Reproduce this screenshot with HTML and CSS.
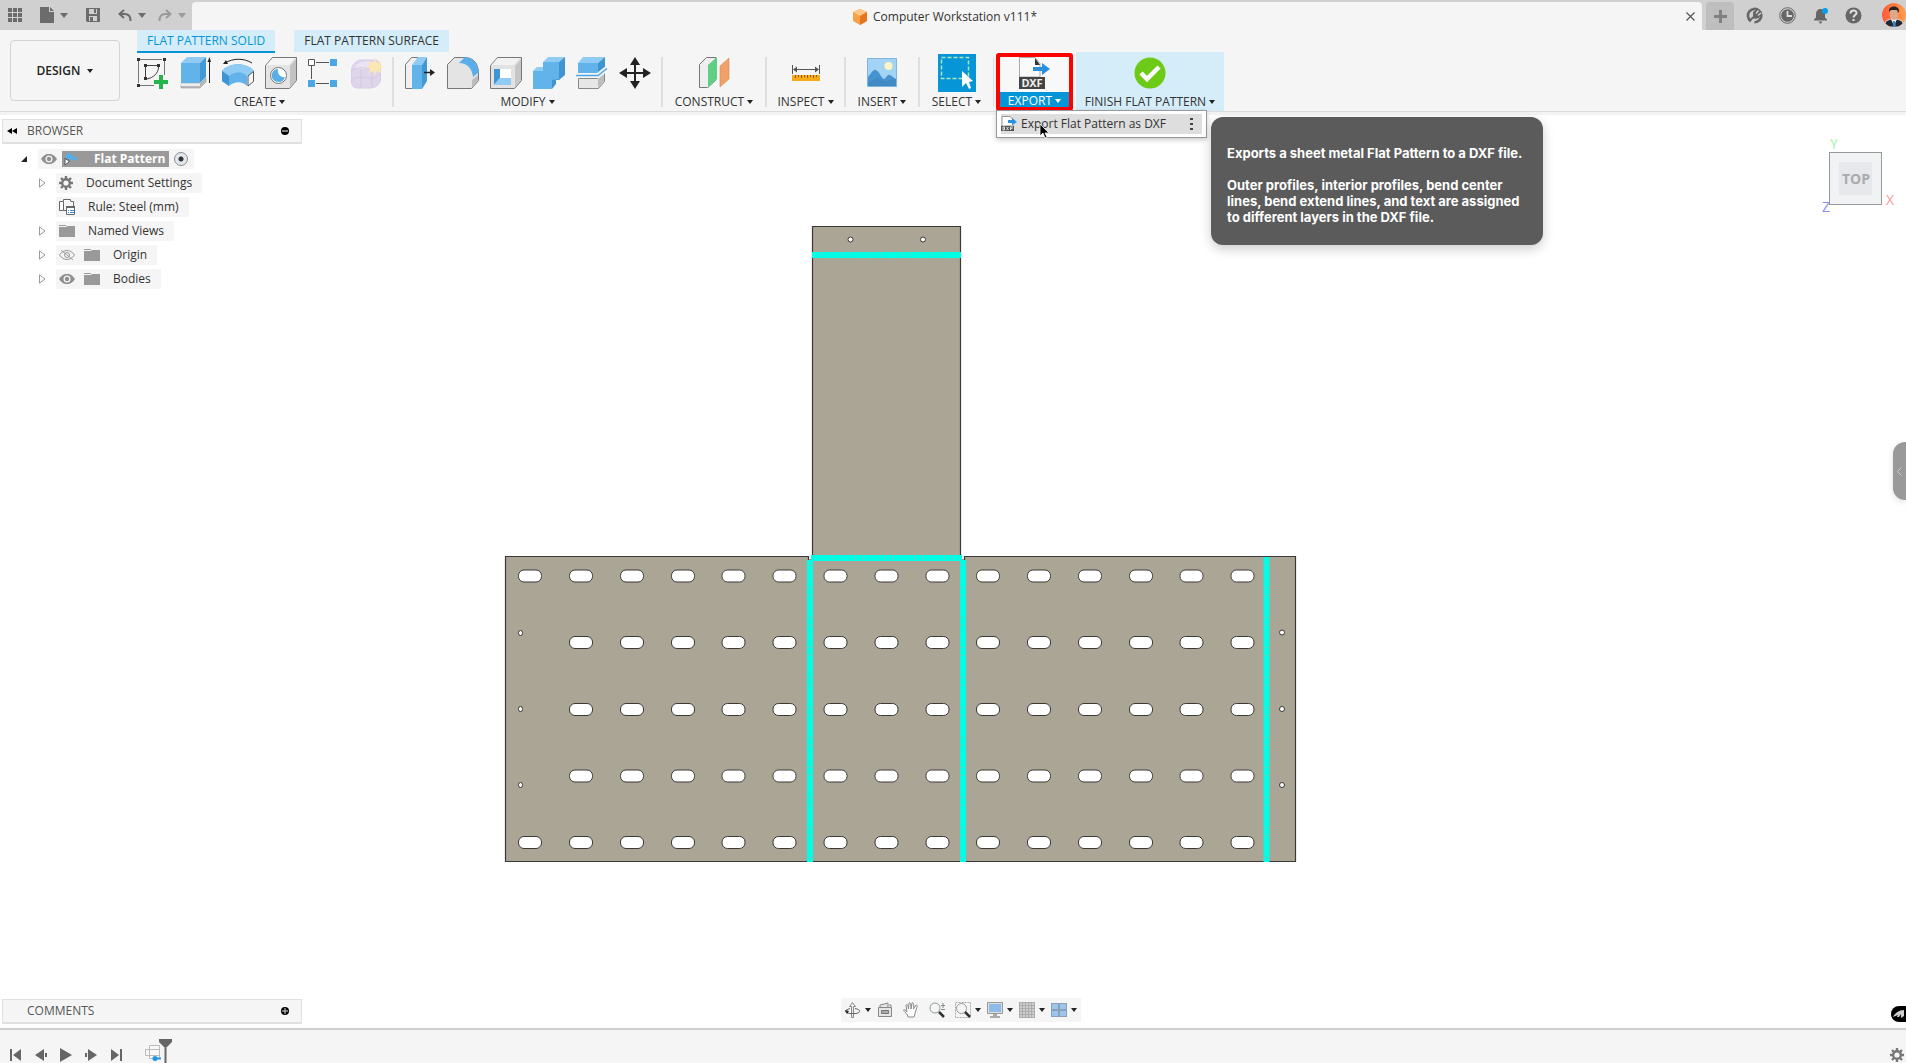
FILE: index.html
```html
<!DOCTYPE html>
<html lang="en">
<head>
<meta charset="utf-8">
<meta name="viewport" content="width=device-width, initial-scale=1">
<title>Computer Workstation v111*</title>
<link rel="stylesheet" href="styles.css">
</head>
<body>
<header class="titlebar">
  <div class="quick">
    <button class="tool" aria-label="Data panel"><svg width="14" height="14" viewBox="0 0 14 14"><path fill="#6c6c6c" d="M0 0h4v4H0zM5 0h4v4H5zM10 0h4v4h-4zM0 5h4v4H0zM5 5h4v4H5zM10 5h4v4h-4zM0 10h4v4H0zM5 10h4v4H5zM10 10h4v4h-4z"/></svg></button>
    <button class="tool file" aria-label="File"><svg width="14" height="16" viewBox="0 0 14 16"><path fill="#6c6c6c" d="M0 0h9v5h5v11H0z"/><path fill="#6c6c6c" d="M10 0l4 4h-4z"/></svg><i class="caret big"></i></button>
    <button class="tool save" aria-label="Save"><svg width="14" height="14" viewBox="0 0 14 14"><path fill="#6c6c6c" fill-rule="evenodd" d="M0 0h14v14H1l-1-1zM3 1v5h8V1zM3 8v5h8V8z"/><path fill="#6c6c6c" d="M8 1h2v4H8zM4 9h3v4H4z"/></svg></button>
    <button class="tool undo" aria-label="Undo"><svg width="14" height="13" viewBox="0 0 14 13"><path fill="none" stroke="#6c6c6c" stroke-width="2" d="M6 1L1.500 5L6 9M2 5h5c4 0 5.500 3 5.500 7"/></svg><i class="caret big"></i></button>
    <button class="tool redo" aria-label="Redo"><svg width="14" height="13" viewBox="0 0 14 13"><path fill="none" stroke="#9a9a9a" stroke-width="2" d="M8 1l4.500 4L8 9M12 5H7c-4 0-5.500 3-5.500 7"/></svg><i class="caret big"></i></button>
  </div>
  <div class="doc-tab">
    <div class="doc-title">
      <svg width="14" height="16" viewBox="0 0 14 16"><path fill="#f9a04a" d="M7 0l7 3v9l-7 4-7-4V3z"/><path fill="#ffc68a" d="M7 0l7 3-7 4-7-4z"/><path fill="#e5761d" d="M7 7l7-4v9l-7 4z"/></svg>
      <span>Computer Workstation v111*</span>
    </div>
    <button class="tool" aria-label="Close tab"><svg width="9" height="9" viewBox="0 0 9 9"><path stroke="#555" stroke-width="1.200" d="M.5.5l8 8M8.500.5l-8 8"/></svg></button>
  </div>
  <button class="new-tab" aria-label="New tab"><svg width="13" height="13" viewBox="0 0 13 13"><path stroke="#808080" stroke-width="3" d="M6.500 0v13M0 6.500h13"/></svg></button>
  <div class="account">
    <button class="tool" aria-label="Extensions"><svg width="17" height="17" viewBox="0 0 17 17"><path fill="none" stroke="#666" stroke-width="2.600" d="M5 14.200A6.700 6.700 0 1 1 13.500 13.200 6.700 6.700 0 0 1 8.500 15.200"/><path fill="#666" d="M7 5l4-3 4 5-2 4-4 1-2-2z"/><path stroke="#d0d0d0" stroke-width="1.400" d="M10 6.500l2.500-3M12 8.500l3-2.500"/><path stroke="#666" stroke-width="2" d="M3 14l6-5"/></svg></button>
    <button class="tool" aria-label="Job status"><svg width="17" height="17" viewBox="0 0 17 17"><circle cx="8.500" cy="8.500" r="7.800" fill="none" stroke="#666"/><circle cx="8.500" cy="8.500" r="6.300" fill="#666"/><path fill="none" stroke="#ddd" stroke-width="1.800" d="M8.500 4v5H13"/></svg></button>
    <button class="tool" aria-label="Notifications"><svg width="17" height="17" viewBox="0 0 17 17"><path fill="#666" d="M2 13.500v-1l2-2V7c0-3 2-4.500 3.500-5h2C12 3 13 5 13 7v3.500l2 2v1zM6.500 14.500h4L9 16.500H8z"/><circle cx="13" cy="4" r="3" fill="#0a9de8"/></svg></button>
    <button class="tool" aria-label="Help"><svg width="17" height="17" viewBox="0 0 17 17"><circle cx="8.500" cy="8.500" r="8" fill="#666"/><path fill="none" stroke="#e0e0e0" stroke-width="2" d="M5.500 6.500c0-4 6-4 6-.5 0 2-3 2-3 4.500M8.500 12v2"/></svg></button>
    <button class="tool avatar" aria-label="Profile"><svg width="24" height="24" viewBox="0 0 24 24"><defs><linearGradient id="av"><stop offset="0" stop-color="#ff5a3c"/><stop offset="1" stop-color="#ffa04a"/></linearGradient><clipPath id="ac"><circle cx="12" cy="12" r="12"/></clipPath></defs><g clip-path="url(#ac)"><path fill="url(#av)" d="M0 0h24v24H0z"/><path fill="#1d2836" stroke="#eee" stroke-width=".8" d="M2 24l2-6 5-2h6l5 2 2 6z"/><path fill="#f4f6f8" d="M9 16l3 7 3-7z"/><path fill="#4b82b8" d="M11 18h2l1 6h-3z"/><path fill="#dca98b" d="M8 7h8v5c0 3-2 5-4 5s-4-2-4-5z"/><path fill="#2b211e" d="M7 9c-1-7 10-7 10-1l-1 2-1-3H9z"/></g></svg></button>
  </div>
</header>

<section class="ribbon" aria-label="Ribbon">
  <button class="workspace-switch">DESIGN <i class="caret"></i></button>
  <div class="ribbon-main">
    <div class="ribbon-tabs" role="tablist">
      <button class="ribbon-tab active" role="tab" aria-selected="true">FLAT PATTERN SOLID</button>
      <button class="ribbon-tab" role="tab" aria-selected="false">FLAT PATTERN SURFACE</button>
    </div>
    <div class="groups">
      <div class="group create">
        <div class="icons">
          <button class="tool" aria-label="Create sketch"><svg width="32" height="32" viewBox="0 0 32 32"><path fill="none" stroke="#777" d="M4 2.500h22M2.500 4v22M28.500 4v14M4 28.500h14"/><path fill="#333" d="M1 1h3v3H1zM27 1h3v3h-3zM1 27h3v3H1zM8 7h3v3H8zM21 7h3v3h-3zM8 20h3v3H8z"/><path fill="none" stroke="#444" d="M11 8.500h10M9.500 10v10M22.500 10c0 6-5 11-12 12"/><path fill="#25b34b" d="M23 18h4v5h5v4h-5v5h-4v-5h-5v-4h5z"/></svg></button>
          <button class="tool" aria-label="Extrude"><svg width="32" height="32" viewBox="0 0 32 32"><path fill="#b9b9b9" stroke="#999" stroke-width=".6" d="M2 27h19l6-6v4l-6 6H2z"/><path fill="#eee" d="M2 27h19v2H2z"/><path fill="#62b3ea" d="M2 6h19v20H2z"/><path fill="#8fcbf3" d="M2 6l6-6h19l-6 6z"/><path fill="#4398d6" d="M21 6l6-6v20l-6 6z"/><path stroke="#222" d="M30.500 3v23"/><path fill="#222" d="M28.500 5l2-5 1.500 5z"/></svg></button>
          <button class="tool" aria-label="Revolve"><svg width="32" height="32" viewBox="0 0 32 32"><path fill="#62b3ea" d="M0 14c7-9 25-9 32 0l-7 5v10c-5-5-12-5-18 0l-7-5z"/><path fill="#8fcbf3" d="M0 14c7-9 25-9 32 0l-7 5c-5-5-12-5-18 0z"/><path fill="#3f95d2" d="M0 14l7 5v10l-7-5z"/><path fill="#f5f5f5" stroke="#555" d="M26 19l5.500-4.500v10L26 29z"/><path fill="none" stroke="#222" d="M3 6c8-5 19-5 27 0"/><path fill="#222" d="M1 7l3-4 2 4z"/></svg></button>
          <button class="tool" aria-label="Hole"><svg width="32" height="32" viewBox="0 0 32 32"><path fill="#e4e4e4" stroke="#777" d="M.5 8.500l7-8h24v23l-7 8H.5z"/><path fill="#c2c2c2" d="M25 9l6-7v21l-6 7z"/><path fill="#f5f5f5" d="M1.500 8L8 1h22l-6 7z"/><circle cx="13.500" cy="18.500" r="8" fill="#fff" stroke="#777"/><path fill="#58ade7" d="M13 12c-9 1-8 13 1 13 3 0 5-2 6-5-5 1-8-4-7-8z"/></svg></button>
          <button class="tool" aria-label="Pattern"><svg width="32" height="32" viewBox="0 0 32 32"><path stroke="#555" d="M8 5.500h13M8 26.500h13M3.500 9v13"/><path fill="#fff" stroke="#555" d="M.5 2.500h6v6h-6z"/><path fill="#4aa6e4" d="M22 2h7v7h-7zM0 23h7v7H0zM22 23h7v7h-7z"/></svg></button>
          <button class="tool" aria-label="Create form"><svg width="32" height="32" viewBox="0 0 32 32"><path fill="#e0d6ec" stroke="#d8cce6" d="M.5 13c0-5 5-10 10-10h12c5 0 7 3 7 7v12c0 5-5 9-10 9h-13c-4 0-6-3-6-6z"/><path fill="#eae3f3" d="M5 8c5-5 17-4 22-1l-5 5H4z"/><path fill="none" stroke="#d3c7e2" d="M1 13c7-3 14-3 20 0v17M10 12v18M1 22c8-3 15-2 20 0l8-5"/><path fill="#fbe7b4" d="M24 1l2 5 4-2-1 4 3 2-3 2 1 4-4-2-2 4-2-4-4 2 1-4-4-2 4-2-1-4 4 2z"/></svg></button>
        </div>
        <button class="group-label">CREATE <i class="caret"></i></button>
      </div>
      <div class="group modify">
        <div class="icons">
          <button class="tool" aria-label="Press pull"><svg width="32" height="32" viewBox="0 0 32 32"><path fill="#f0f0f0" stroke="#777" d="M1.500 31.500v-24l6-7h8v24l-7 7z"/><path fill="#62b3ea" d="M8 8h10v24H8z"/><path fill="#8fcbf3" d="M8 8l6-8h9l-5 8z"/><path fill="#4398d6" d="M18 8l5-8v24l-5 8z"/><path stroke="#222" stroke-width="1.500" d="M20 15.500h8"/><path fill="#222" d="M26 12l5 3.500-5 3.500z"/></svg></button>
          <button class="tool" aria-label="Fillet"><svg width="32" height="32" viewBox="0 0 32 32"><path fill="#e4e4e4" stroke="#777" d="M.5 31.500v-24l7-7H19c8 1 12 6 12.500 15v8l-7 8z"/><path fill="#bdbdbd" d="M25 23l6-5v5l-6 7z"/><path fill="#5aaee9" d="M12 6l6-6c9 1 13 8 14 15l-6 5C25 11 20 6 12 6z"/></svg></button>
          <button class="tool" aria-label="Shell"><svg width="32" height="32" viewBox="0 0 32 32"><path fill="#e2e2e2" stroke="#777" d="M.5 8.500l7-8h24v23l-7 8H.5z"/><path fill="#c6c6c6" d="M25 9l6-7v21l-6 7z"/><path fill="#f2f2f2" d="M1.500 8L8 1h22l-6 7z"/><path fill="#fff" d="M4 12h17v16H4z"/><path fill="#3f95d2" d="M4 12h6v9l-6 7z"/><path fill="#8fcbf3" d="M4 28l6-7h11v7z"/></svg></button>
          <button class="tool" aria-label="Combine"><svg width="32" height="32" viewBox="0 0 32 32"><path fill="#62b3ea" d="M0 14h10V5h16v18h-7v9H0z"/><path fill="#8fcbf3" d="M10 5l5-5h17l-6 5zM0 14l4-4h6v4z"/><path fill="#3f95d2" d="M26 5l6-5v18l-6 5h-3v4l-4 5v-9l7-1z"/></svg></button>
          <button class="tool" aria-label="Split body"><svg width="32" height="32" viewBox="0 0 32 32"><path fill="#e6e6e6" stroke="#888" d="M2.500 21.500h19l7-6v9l-6 7h-20z"/><path fill="#bdbdbd" d="M22 22l6-5v7l-6 7z"/><path fill="#62b3ea" d="M2 6h20v10H2z"/><path fill="#8fcbf3" d="M2 6l5-6h22l-7 6z"/><path fill="#3f95d2" d="M22 6l7-6v10l-7 6z"/><path fill="none" stroke="#f5f5f5" stroke-width="5" d="M0 18.500h22l10-8"/><path fill="none" stroke="#4aa6e4" stroke-width="1.500" d="M0 18.500h22l9-7"/></svg></button>
          <button class="tool" aria-label="Move"><svg width="32" height="32" viewBox="0 0 32 32"><path stroke="#222" stroke-width="2" d="M16 5v22M5 16h22"/><path fill="#222" d="M16 0l5 8H11zM16 32l5-8H11zM0 16l8-5v10zM32 16l-8-5v10z"/></svg></button>
        </div>
        <button class="group-label">MODIFY <i class="caret"></i></button>
      </div>
      <div class="group construct">
        <div class="icons"><button class="tool" aria-label="Offset plane"><svg width="32" height="32" viewBox="0 0 32 32"><path fill="#eee" stroke="#777" d="M1.500 30.500v-23l7-7h9v23l-8 7z"/><path fill="#5fcf86" d="M10 8l9-8v22l-9 9z"/><path fill="#f0a069" stroke="#d98a55" stroke-width=".6" d="M22 9l9-8v21l-9 8z"/></svg></button></div>
        <button class="group-label">CONSTRUCT <i class="caret"></i></button>
      </div>
      <div class="group inspect">
        <div class="icons"><button class="tool" aria-label="Measure"><svg width="32" height="32" viewBox="0 0 32 32"><path stroke="#555" d="M2.500 8v9M29.500 8v9M4 12.500h24"/><path fill="#555" d="M3 12.500l4-3v6zM29 12.500l-4-3v6z"/><path fill="#f7ab1b" d="M2 18h28v6H2z"/><path stroke="#8a5e10" d="M5.500 18v3M8.500 18v2M11.500 18v3M14.500 18v2M17.500 18v3M20.500 18v2M23.500 18v3M26.500 18v2"/></svg></button></div>
        <button class="group-label">INSPECT <i class="caret"></i></button>
      </div>
      <div class="group insert">
        <div class="icons"><button class="tool" aria-label="Insert image"><svg width="32" height="32" viewBox="0 0 32 32"><path fill="#a3d4f5" stroke="#7fb4dc" d="M1.500 1.500h29v28h-29z"/><circle cx="22.500" cy="9" r="4" fill="#fdf5c4"/><path fill="#4793cf" d="M2 20c3-3 5-8 8-7s6 9 8 9 3-5 6-4 3 3 6 4v7H2z"/><path fill="#3b82bd" d="M2 26l9-5 9 3 10-2v7H2z" opacity=".5"/></svg></button></div>
        <button class="group-label">INSERT <i class="caret"></i></button>
      </div>
      <div class="group select">
        <div class="icons"><button class="tool tile" aria-label="Select"><svg width="38" height="38" viewBox="0 0 38 38"><path fill="none" stroke="#a6e6b8" stroke-width="1.500" stroke-dasharray="4 2" d="M3.500 3.500h27v21h-27z"/><path fill="#fff" d="M24 17v16l4-4 3 6 2-1-2-6 4-1z"/></svg></button></div>
        <button class="group-label">SELECT <i class="caret"></i></button>
      </div>
      <div class="export">
        <button class="export-button">
          <svg width="32" height="32" viewBox="0 0 32 32"><path fill="#fafafa" stroke="#aaa" d="M.5 20V.5H16l5 6V20z"/><path fill="#333" d="M16 1l5 7h-5z"/><path fill="#2a8fdd" d="M14 10h9V6l8 6-8 6v-4h-9z"/><path fill="#444" d="M0 20h26v12H0z"/><text class="dxf" x="13" y="30" text-anchor="middle">DXF</text></svg>
          <span class="export-label">EXPORT <i class="caret"></i></span>
        </button>
        <div class="menu" role="menu">
          <button class="menu-item" role="menuitem">
            <svg width="16" height="16" viewBox="0 0 16 16"><path fill="#fff" stroke="#999" d="M1 10V.500h8l3 3V10z"/><path fill="#2a8fdd" d="M7 4h4V2l5 4-5 3V7H7z"/><path fill="#555" d="M0 10h13v5H0z"/><path fill="none" stroke="#ddd" d="M2 11v3h1.500v-3zM5.500 11l2 3M7.500 11l-2 3M9.500 14v-3H12M9.500 12.500h2"/></svg>
            <span>Export Flat Pattern as DXF</span>
            <svg class="dots" width="3" height="12" viewBox="0 0 3 12"><path fill="#444" d="M0 0h3v2H0zM0 5h3v2H0zM0 10h3v2H0z"/></svg>
          </button>
        </div>
        <div class="tooltip" role="tooltip">
          <p>Exports a sheet metal Flat Pattern to a DXF file.</p>
          <p>Outer profiles, interior profiles, bend center lines, bend extend lines, and text are assigned to different layers in the DXF file.</p>
        </div>
        <svg class="cursor" width="10" height="16" viewBox="0 0 10 16"><path fill="#000" stroke="#fff" stroke-width=".8" d="M1 1v12l3-3 2 5 2-1-2-4h4z"/></svg>
      </div>
      <div class="finish">
        <button class="tool" aria-label="Finish flat pattern"><svg width="32" height="32" viewBox="0 0 32 32"><circle cx="16" cy="16" r="15.500" fill="#6dca17"/><path fill="none" stroke="#fff" stroke-width="4.500" d="M7 16l6 6L25 10"/></svg></button>
        <button class="group-label">FINISH FLAT PATTERN <i class="caret"></i></button>
      </div>
    </div>
  </div>
</section>

<main class="workspace">
  <svg class="model" width="794" height="640" viewBox="504 224 794 640" role="img" aria-label="Flat pattern">
    <defs>
      <rect id="slot" x="-11.500" y="-5.500" width="23" height="12" rx="5.500" fill="#fff" stroke="#3a3936"/>
      <g id="row"><use href="#slot" x="581"/><use href="#slot" x="632"/><use href="#slot" x="683"/><use href="#slot" x="733.500"/><use href="#slot" x="784.500"/><use href="#slot" x="835.500"/><use href="#slot" x="886.500"/><use href="#slot" x="937.500"/><use href="#slot" x="988"/><use href="#slot" x="1039"/><use href="#slot" x="1090"/><use href="#slot" x="1141"/><use href="#slot" x="1191.500"/><use href="#slot" x="1242.500"/></g>
    </defs>
    <path fill="#aba595" stroke="#3a3936" stroke-width="1.200" d="M812.500 556V226.500h148V556l1 4h3v-3.500h331v305h-790v-305h303v3.500h3z"/>
    <use href="#row" y="575.500"/><use href="#row" y="642"/><use href="#row" y="709"/><use href="#row" y="775.500"/><use href="#row" y="842"/>
    <use href="#slot" x="530" y="575.500"/><use href="#slot" x="530" y="842"/>
    <g fill="#fff" stroke="#3a3936"><circle cx="850.500" cy="239.500" r="2.500"/><circle cx="923" cy="239.500" r="2.500"/><circle cx="1282" cy="632.500" r="2.500"/><circle cx="1282" cy="709" r="2.500"/><circle cx="1282" cy="785" r="2.500"/><rect x="518.500" y="630.500" width="4" height="5" rx="2"/><rect x="518.500" y="706.500" width="4" height="5" rx="2"/><rect x="518.500" y="782.500" width="4" height="5" rx="2"/></g>
    <path fill="none" stroke="#00fde6" stroke-width="6" d="M812 255h149M811 558h151M810 560v302M963 560v302M1266.500 557v305"/>
    <path fill="none" stroke="#4fd6c6" stroke-width="4" stroke-dasharray="1 21 1 7" d="M820 255h141M832 558h128M810 565v296M963 565v296M1266.500 565v296"/>
  </svg>

  <div class="top-row">
    <section class="browser">
      <div class="panel">
        <svg width="10" height="6" viewBox="0 0 10 6"><path d="M5 0v6L0 3zM10 0v6L5 3z"/></svg>
        <h2>BROWSER</h2>
        <button class="tool" aria-label="Minimize"><svg width="8" height="8" viewBox="0 0 8 8"><circle cx="4" cy="4" r="4"/><path stroke="#fff" d="M1 4h6"/></svg></button>
      </div>
      <ul class="tree">
        <li class="root"><svg class="open" width="8" height="8" viewBox="0 0 8 8"><path fill="#222" d="M7 1v6H1z"/></svg>
          <div class="node"><svg class="eye" width="16" height="10"><use href="#eye"/></svg><span class="selected"><svg width="14" height="14" viewBox="0 0 14 14"><path fill="#53aeea" d="M1 4l5-4 2 4 6 2-3 3-4-2-3 1z"/><path fill="#fff" stroke="#555" d="M1 6l2 2 2 0v2l-4 3z"/></svg>Flat Pattern</span><input type="radio" name="active" checked aria-label="Activate Flat Pattern"></div></li>
        <li><svg class="closed" width="7" height="10"><use href="#tri"/></svg>
          <div class="node"><svg width="14" height="14"><use href="#gear"/></svg>Document Settings</div></li>
        <li><span class="closed spacer"></span>
          <div class="node"><svg width="16" height="16" viewBox="0 0 16 16"><path fill="#fff" stroke="#666" d="M4.500 11.500h-4v-9h4zM4.500 2V.500h7V2M11.500 2.500h3v5M4.500 11.500h3"/><path fill="#fff" stroke="#666" d="M7.500 7.500h8v8h-8z"/><path fill="#666" d="M7 7h9v2H7z"/><path stroke="#3a8fd0" stroke-dasharray="1 1 4 9" d="M9 11.500h6M9 13.500h6"/></svg>Rule: Steel (mm)</div></li>
        <li><svg class="closed" width="7" height="10"><use href="#tri"/></svg>
          <div class="node"><svg width="16" height="12"><use href="#folder"/></svg>Named Views</div></li>
        <li><svg class="closed" width="7" height="10"><use href="#tri"/></svg>
          <div class="node"><svg class="eye" width="16" height="10" viewBox="0 0 16 10"><path fill="none" stroke="#999" d="M.5 5c4-6 11-6 15 0-4 6-11 6-15 0zM2 0l12 10"/><circle cx="8" cy="5" r="2.500" fill="none" stroke="#999"/></svg><svg width="16" height="12"><use href="#folder"/></svg>Origin</div></li>
        <li><svg class="closed" width="7" height="10"><use href="#tri"/></svg>
          <div class="node"><svg class="eye" width="16" height="10"><use href="#eye"/></svg><svg width="16" height="12"><use href="#folder"/></svg>Bodies</div></li>
      </ul>
    </section>
    <svg class="cube" width="80" height="96" viewBox="0 -10 80 96" role="img" aria-label="View cube, top">
      <rect x="9.500" y="14.500" width="52" height="52" fill="#f1f2f3" stroke="#999"/>
      <path fill="#e6e8ec" d="M19 24h33v33H19z"/>
      <text class="face" x="36" y="46" text-anchor="middle">TOP</text>
      <text class="axis" x="14" y="11" text-anchor="middle" fill="#a4f3a4">Y</text>
      <text class="axis" x="70" y="67" text-anchor="middle" fill="#fa9a9a">X</text>
      <text class="axis" x="6" y="74" text-anchor="middle" fill="#8c8cf5">Z</text>
    </svg>
  </div>

  <button class="drawer" aria-label="Open panel"><svg width="5" height="9" viewBox="0 0 5 9"><path fill="none" stroke="#ccc" d="M4.500.5l-4 4 4 4"/></svg></button>

  <div class="bottom-row">
    <div class="panel comments">
      <h2>COMMENTS</h2>
      <button class="tool" aria-label="Expand comments"><svg width="8" height="8" viewBox="0 0 8 8"><circle cx="4" cy="4" r="4"/><path stroke="#ddd" d="M1 4h6M4 1v6"/></svg></button>
    </div>
    <div class="navbar">
      <button class="tool drop" aria-label="Orbit"><svg width="16" height="16" viewBox="0 0 16 16"><path fill="#eee" stroke="#888" d="M6.500 15.500v-11h-2l3-4 3 4h-2v11z"/><path fill="none" stroke="#666" d="M5 6.500c-6 2-6 4 0 5h7M10 6.500c6 1 6 4 1 5"/><path fill="#222" d="M0 8l4 1-2 3z"/></svg><i class="caret"></i></button>
      <button class="tool" aria-label="Look at"><svg width="16" height="16" viewBox="0 0 16 16"><path fill="#e4e4e4" stroke="#888" d="M1.500 5.500h13v9h-13zM3 5V3l8-2v4M12 3h2v2"/><path fill="#aaa" stroke="#777" d="M4.500 8.500h7v3h-7z"/></svg></button>
      <button class="tool" aria-label="Pan"><svg width="16" height="16" viewBox="0 0 16 16"><path fill="#fff" stroke="#888" d="M5 15c0-3-4-5-4.500-7 1-1 2 0 3.500 2L3 3c1-1 2-1 2.500 4L6 1c1-1 2 0 2 6l1-6c1-1 2 0 1.500 6L13 3c2 0 1 2 0 5s-1 4-2 7z"/></svg></button>
      <button class="tool" aria-label="Zoom"><svg width="16" height="16" viewBox="0 0 16 16"><circle cx="6" cy="6" r="5" fill="#f2f7f6" stroke="#999"/><path stroke="#333" stroke-width="2.500" d="M10 10l5 5"/><path stroke="#888" d="M12 3.500h4M14 1v5M12 7.500h4"/></svg></button>
      <button class="tool drop" aria-label="Fit"><svg width="16" height="16" viewBox="0 0 16 16"><path fill="none" stroke="#aaa" stroke-dasharray="2 1" d="M.5.5h15v15H.5z"/><circle cx="6.500" cy="6.500" r="5" fill="#f2f7f6" stroke="#999"/><path stroke="#333" stroke-width="2.500" d="M10 10l5 5"/></svg><i class="caret"></i></button>
      <button class="tool drop" aria-label="Display settings"><svg width="16" height="16" viewBox="0 0 16 16"><path fill="#ddd" stroke="#999" d="M.5.5h15v11H.5z"/><path fill="#8fbbe6" d="M2 2h12v8H2z"/><path fill="#aaa" d="M6 12h4v2h3v2H3v-2h3z"/></svg><i class="caret"></i></button>
      <button class="tool drop" aria-label="Grid and snaps"><svg width="16" height="16" viewBox="0 0 16 16"><path fill="#ccc" d="M0 0h16v16H0z"/><path stroke="#a6a6a6" stroke-width=".8" d="M0 .5h16M0 3.500h16M0 6.500h16M0 9.500h16M0 12.500h16M0 15.500h16M.5 0v16M3.500 0v16M6.500 0v16M9.500 0v16M12.500 0v16M15.500 0v16"/></svg><i class="caret"></i></button>
      <button class="tool drop" aria-label="Viewports"><svg width="16" height="14" viewBox="0 0 16 14"><path fill="#8ca0b8" d="M0 0h16v14H0z"/><path fill="#9cc5ee" d="M1 1h6v5H1zM9 1h6v5H9zM1 8h6v5H1zM9 8h6v5H9z"/></svg><i class="caret"></i></button>
    </div>
    <button class="assist" aria-label="Assistant"><svg width="11" height="9" viewBox="0 0 11 9"><path fill="#d0d0d0" d="M0 7c2-4 6-7 11-7v6L8 8V4L6 7H4l1-2z"/></svg></button>
  </div>
</main>

<footer class="timeline">
  <div class="transport">
    <button class="tool" aria-label="Go to start"><svg width="12" height="12" viewBox="0 0 12 12"><path fill="#666" d="M0 0h2v12H0zM11 0v12L3 6z"/></svg></button>
    <button class="tool" aria-label="Step back"><svg width="12" height="12" viewBox="0 0 12 12"><path fill="#666" d="M9 0v12L0 6zM10 4h2v4h-2z"/></svg></button>
    <button class="tool" aria-label="Play"><svg width="12" height="14" viewBox="0 0 12 14"><path fill="#666" d="M0 0l12 7-12 7z"/></svg></button>
    <button class="tool" aria-label="Step forward"><svg width="12" height="12" viewBox="0 0 12 12"><path fill="#666" d="M3 0v12l9-6zM0 4h2v4H0z"/></svg></button>
    <button class="tool" aria-label="Go to end"><svg width="12" height="12" viewBox="0 0 12 12"><path fill="#666" d="M10 0h2v12h-2zM1 0v12l8-6z"/></svg></button>
  </div>
  <svg class="marker" width="27" height="24" viewBox="0 0 27 24"><path fill="#f8f8f8" stroke="#bbb" d="M4.500 6.500h10v13h-10zM.5 10.500h14v6H.5z"/><path stroke="#2196e8" stroke-width="2" d="M10 19.500h6"/><circle cx="10" cy="19.500" r="2.500" fill="#2196e8"/><path fill="#666" d="M14 0h13v3l-5 5h-3l-5-5z"/><path stroke="#666" stroke-width="2" d="M20.500 6v18"/></svg>
  <button class="tool prefs" aria-label="Timeline settings"><svg width="14" height="14"><use href="#gear"/></svg></button>
</footer>

<svg class="symbols" width="0" height="0" aria-hidden="true">
  <symbol id="eye" viewBox="0 0 16 10"><path fill="#8f8f8f" d="M0 5c4-7 12-7 16 0-4 7-12 7-16 0z"/><circle cx="8" cy="5" r="3.500" fill="#f5f5f5"/><circle cx="8" cy="5" r="2.200" fill="#8f8f8f"/></symbol>
  <symbol id="tri" viewBox="0 0 7 10"><path fill="#fff" stroke="#999" d="M.5.8v8.400L6 5z"/></symbol>
  <symbol id="folder" viewBox="0 0 16 12"><path fill="#999" d="M0 0h7v1H0zM0 2h7l1-1h8v11H0z"/></symbol>
  <symbol id="gear" viewBox="0 0 14 14"><circle cx="7" cy="7" r="3.800" fill="none" stroke="#777" stroke-width="2.400"/><path stroke="#777" stroke-width="2.400" d="M7 0v3M7 11v3M0 7h3M11 7h3M2 2l2 2M10 10l2 2M12 2l-2 2M4 10l-2 2"/></symbol>
</svg>
</body>
</html>
```
FILE: styles.css
```css
* { box-sizing: border-box; }

body {
  margin: 0;
  height: 100vh;
  display: flex;
  flex-direction: column;
  overflow: hidden;
  background: #fff;
  color: #333;
  font: 12px/16px "Open Sans", "Noto Sans", sans-serif;
}

button {
  margin: 0;
  padding: 0;
  border: 0;
  background: none;
  color: inherit;
  font: inherit;
  white-space: nowrap;
}

svg { display: block; flex: none; }
.symbols { position: absolute; }
h2 { margin: 0; font-size: 12px; font-weight: 400; color: #555; }

.tool { display: flex; align-items: center; }

.caret {
  flex: none;
  display: inline-block;
  border: solid transparent;
  border-width: 4px 3px 0;
  border-top-color: #222;
}
.caret.big { border-width: 5px 4px 0; border-top-color: #6c6c6c; }

/* Title bar */
.titlebar {
  display: flex;
  height: 30px;
  flex: none;
  padding-top: 2px;
  background: #d0d0d0;
}
.quick {
  width: 192px;
  display: flex;
  align-items: center;
  gap: 18px;
  padding: 0 0 2px 8px;
}
.quick .tool { gap: 6px; }
.redo { margin-left: -6px; }
.redo .caret.big { border-top-color: #9a9a9a; }
.doc-tab {
  flex: 1;
  display: flex;
  align-items: center;
  padding: 0 7px 0 12px;
  border-radius: 4px 4px 0 0;
  background: #f5f5f5;
}
.doc-title {
  flex: 1;
  display: flex;
  justify-content: center;
  align-items: center;
  gap: 6px;
  padding-top: 2px;
}
.new-tab {
  width: 28px;
  margin-left: 4px;
  display: grid;
  place-items: center;
  border-radius: 4px 4px 0 0;
  background: #bebebe;
}
.account {
  display: flex;
  align-items: center;
  gap: 16px;
  padding: 0 0 2px 12px;
}
.avatar { margin-left: 4px; }

/* Ribbon */
.ribbon {
  display: flex;
  flex: none;
  height: 85px;
  background: #f5f5f5;
  border-bottom: 3px solid #f3f3f3;
  box-shadow: inset 0 -1px #dcdcdc;
}
.workspace-switch {
  width: 110px;
  height: 61px;
  margin: 10px 11px 0 10px;
  border: 1px solid #d4d4d4;
  border-radius: 4px;
  color: #222;
  font-weight: 600;
}
.workspace-switch .caret { margin: 0 0 2px 4px; }
.ribbon-tabs { display: flex; gap: 19px; height: 22px; padding-left: 6px; }
.ribbon-tab { height: 22px; padding: 0 10px; background: #d4edf8; }
.ribbon-tab.active { height: 23px; padding-top: 1px; color: #0696d7; border-bottom: 2px solid #0696d7; }
.groups { display: flex; height: 59px; }
.group {
  height: 50px;
  margin-top: 5px;
  display: flex;
  flex-direction: column;
  align-items: center;
  border-right: 2px solid #dfdfdf;
}
.icons { display: flex; align-items: center; height: 32px; gap: 11px; }
.group-label { height: 26px; line-height: 26px; }
.group-label .caret, .export-label .caret { margin: 0 0 2px; }
.create { width: 263px; padding-right: 4px; }
.modify { width: 269px; }
.construct { width: 104px; }
.inspect { width: 79px; }
.insert, .select { width: 74px; }
.tile { background: #0696d7; }
.select { border-right-width: 1px; }

.export { position: relative; margin: 1px 3px 0 2px; }
.export-button {
  width: 77px;
  height: 58px;
  display: flex;
  flex-direction: column;
  align-items: center;
  border: 4px solid #fe0000;
  border-radius: 3px;
  background: #f8f8f8;
}
.export-label {
  align-self: stretch;
  margin-top: 3px;
  height: 15px;
  line-height: 18px;
  background: #0696d7;
  color: #fff;
}
.export-label .caret { border-top-color: #fff; }
.dxf { font: 700 11px "Noto Sans", sans-serif; fill: #eee; }

.menu {
  position: absolute;
  z-index: 2;
  top: 57px;
  left: 0;
  width: 211px;
  padding: 3px 4px;
  border: 1px solid #999;
  background: #fff;
  box-shadow: 0 2px 5px #0003;
}
.menu-item {
  width: 100%;
  height: 20px;
  display: flex;
  align-items: center;
  gap: 4px;
  background: #dedede;
}
.menu-item .dots { margin: 0 9px 0 auto; }
.cursor { position: absolute; z-index: 4; top: 70px; left: 43px; }

.tooltip {
  position: absolute;
  z-index: 3;
  top: 64px;
  left: 215px;
  width: 332px;
  padding: 28px 16px 20px;
  border-radius: 12px;
  background: #5b5b5b;
  color: #fff;
  font: 700 13px/16px Inter, sans-serif;
  box-shadow: 0 4px 12px #0003;
}
.tooltip p { margin: 0; }
.tooltip p + p { margin-top: 16px; }

.finish {
  width: 148px;
  padding-top: 5px;
  display: flex;
  flex-direction: column;
  align-items: center;
  background: #d4edf8;
}

/* Canvas and the panels over it */
.workspace {
  position: relative;
  flex: 1;
  min-height: 0;
  display: flex;
  flex-direction: column;
  justify-content: space-between;
  padding-top: 4px;
}
.model { position: absolute; left: 504px; top: 109px; }
.top-row, .bottom-row { position: relative; display: flex; justify-content: space-between; }
.panel {
  width: 300px;
  height: 25px;
  margin-left: 2px;
  display: flex;
  align-items: center;
  padding: 0 12px 0 4px;
  border: 1px solid #e0e0e0;
  border-width: 1px 1px 2px;
  background: #f5f5f5;
}
.panel h2 { flex: 1; margin-left: 10px; }
.comments h2 { margin-left: 20px; }
.tree { margin: 3px 0 0; padding: 0; list-style: none; }
.tree li { display: flex; align-items: center; height: 24px; }
.open { margin: 0 10px 0 20px; }
.closed { margin: 0 10px 0 39px; }
.spacer { width: 7px; }
.node {
  height: 20px;
  display: flex;
  align-items: center;
  gap: 13px;
  padding: 0 10px 0 3px;
  background: #f5f5f5;
}
.node .eye { margin-right: -4px; }
.root .node { gap: 5px; padding-right: 6px; }
.root .eye { margin-right: 0; }
.selected {
  height: 16px;
  display: flex;
  align-items: center;
  gap: 16px;
  padding: 0 4px 0 2px;
  background: #999;
  color: #fff;
  font-weight: 700;
}
.node input {
  appearance: none;
  width: 14px;
  height: 14px;
  margin: 0;
  border: 1px solid #8c8c8c;
  border-radius: 50%;
  background: radial-gradient(circle, #333 2px, #e3e8f0 3px);
}
.cube { margin: 9px 6px 0 0; }
.face { font: 700 14px "Open Sans", sans-serif; fill: #a9abae; }
.axis { font: 14px "Open Sans", sans-serif; }

.drawer {
  position: absolute;
  right: 0;
  top: 327px;
  width: 13px;
  height: 58px;
  display: grid;
  place-items: center;
  border-radius: 12px 0 0 12px;
  background: #999;
  box-shadow: 0 2px 6px #0002;
}

.bottom-row {
  display: grid;
  grid-template-columns: 302px 1fr 286px;
  padding-bottom: 4px;
  align-items: end;
}
.navbar {
  justify-self: center;
  height: 24px;
  margin-bottom: 2px;
  display: flex;
  align-items: center;
  gap: 10px;
  padding: 0 4px;
  background: #f5f5f5;
}
.navbar .drop { gap: 4px; margin-right: -4px; }
.navbar .drop:last-child { margin-right: 0; }
.assist {
  justify-self: end;
  width: 15px;
  height: 16px;
  margin-bottom: 2px;
  display: grid;
  place-items: center;
  border-radius: 8px 0 0 8px;
  background: #000;
}

/* Timeline */
.timeline {
  flex: none;
  height: 35px;
  display: flex;
  align-items: flex-end;
  padding: 0 2px 0 10px;
  border-top: 2px solid #cecece;
  background: #f5f5f5;
}
.transport { display: flex; gap: 13px; height: 17px; align-items: center; }
.marker { margin-left: 23px; }
.prefs { margin-left: auto; padding-bottom: 1px; }
```
